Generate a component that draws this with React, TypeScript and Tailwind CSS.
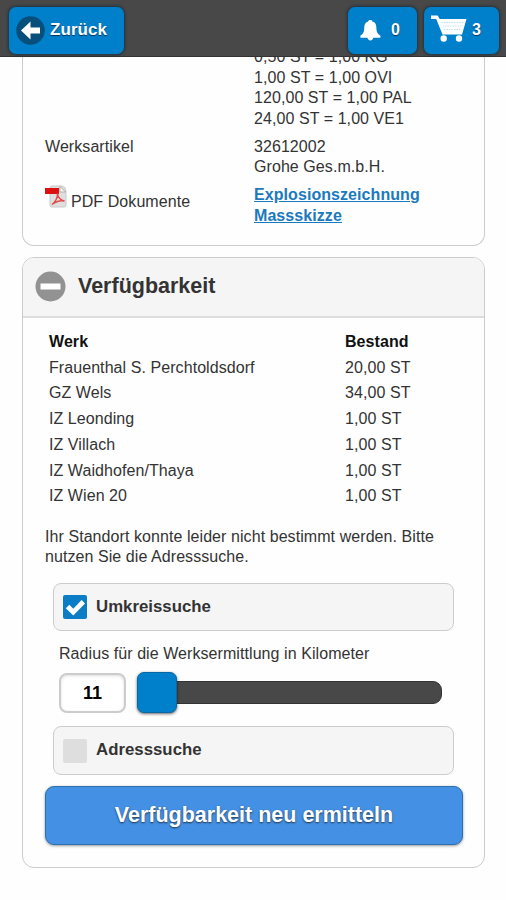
import React from "react";

const stock: [string, string][] = [
  ["Frauenthal S. Perchtoldsdorf", "20,00 ST"],
  ["GZ Wels", "34,00 ST"],
  ["IZ Leonding", "1,00 ST"],
  ["IZ Villach", "1,00 ST"],
  ["IZ Waidhofen/Thaya", "1,00 ST"],
  ["IZ Wien 20", "1,00 ST"],
];

function Header() {
  const button =
    "flex h-[47px] items-center rounded-[7px] bg-[#0080cb] font-bold text-white shadow-[0_0_3px_1px_rgba(10,40,60,0.65)] [text-shadow:0_1px_1px_#035]";
  return (
    <header className="relative z-10 flex h-[57px] shrink-0 items-start border-b border-[#333] bg-[#484848] pt-[7px] pr-[7px] pl-[9px]">
      <button className={button + " w-[115px] pl-[7px] text-[17px]"}>
        <svg width="29" height="29" viewBox="0 0 29 29">
          <circle cx="14.5" cy="14.5" r="14.3" fill="#064f7b" />
          <path d="M5 14.5 14.5 5.5v6H24v6h-9.5v6z" fill="#fff" />
        </svg>
        <span className="ml-[5px]">Zurück</span>
      </button>
      <button className={button + " ml-auto w-[69px] pl-[12px] text-[16px]"}>
        <svg width="21" height="23" viewBox="0 0 21 23" fill="#fff">
          <path d="M8.3 2.5C8.3.6 12.3.6 12.3 2.5c3.1.8 4.1 3.1 4.1 6.5 0 4 1.1 5.800 4 7.600v2.200h-7.200c-.5 3.700-5.200 3.700-5.700 0H.4v-2.200C3.300 14.800 4.200 13 4.200 9c0-3.400 1.200-5.700 4.100-6.500z" />
        </svg>
        <span className="ml-[10px]">0</span>
      </button>
      <button className={button + " ml-[7px] w-[75px] pl-[7px] text-[16px]"}>
        <svg width="36" height="29" viewBox="0 0 36 29" className="-mt-[7px]">
          <path d="M0 2.5h6q1 0 1.500 1.400L8.700 6H35.500l-4.500 15.500H11.500L5.200 6H0z" fill="#fff" />
          <path d="M10.5 9.500h22M11.500 13h20M13 16.500h17" stroke="#bddff3" strokeWidth="1.1" strokeDasharray="1.5 1" />
          <circle cx="12.7" cy="25.5" r="3.2" fill="#fff" />
          <circle cx="28" cy="25.5" r="3.2" fill="#fff" />
        </svg>
        <span className="ml-[5px]">3</span>
      </button>
    </header>
  );
}

function PdfIcon() {
  return (
    <svg width="22" height="24" viewBox="0 0 22 24">
      <path d="M7 1h10q4 1 4 5v14q0 2-2 2H7q-2 0-2-2V3q0-2 2-2z" fill="#dfdfdf" stroke="#cacaca" />
      <path d="M15 1.500v5.500h5.500z" fill="#fafafa" stroke="#999" strokeWidth=".7" />
      <path d="M0 3h14v6H0z" fill="#dc1010" />
      <path d="M7 19.500c3-2 6-7 5.500-11 0 4 3.500 7 7 7.500-4-1-8 0-12.500 3.500z" fill="none" stroke="#e44a4a" strokeWidth="1.5" />
    </svg>
  );
}

export default function App() {
  return (
    <div className="flex h-[900px] w-[506px] flex-col overflow-hidden bg-[#fefefe] font-['Liberation_Sans',Arial,sans-serif] text-[16px] leading-[20.4px] tracking-[0.07px] text-[#333]">
      <Header />
      <main className="flex flex-col pr-[21px] pl-[22px]">
        <section className="-mt-[10px] flex h-[199px] flex-col rounded-b-[12px] border border-t-0 border-[#ccc] pl-[22px]">
          <div className="mt-[0.4px] pl-[209px]">
            <p>0,50 ST = 1,00 KG</p>
            <p>1,00 ST = 1,00 OVI</p>
            <p>120,00 ST = 1,00 PAL</p>
            <p>24,00 ST = 1,00 VE1</p>
          </div>
          <div className="mt-[7.600px] flex">
            <p className="w-[209px]">Werksartikel</p>
            <div>
              <p>32612002</p>
              <p>Grohe Ges.m.b.H.</p>
            </div>
          </div>
          <div className="mt-[8px] flex">
            <div className="flex w-[209px]">
              <PdfIcon />
              <span className="mt-[7px] ml-[4px]">PDF Dokumente</span>
            </div>
            <div className="flex flex-col font-bold text-[#1b79bd] underline">
              <a>Explosionszeichnung</a>
              <a>Massskizze</a>
            </div>
          </div>
        </section>

        <section className="mt-[11px] h-[611px] overflow-hidden rounded-[12px] border border-[#ccc]">
          <h2 className="flex h-[60px] items-center border-b-2 border-[#ddd] bg-[#f5f5f5] pl-[12px] text-[21.5px] font-bold tracking-[0px]">
            <svg width="31" height="31" viewBox="0 0 31 31" className="-mt-[2px]">
              <circle cx="15.5" cy="15.5" r="15" fill="#929292" />
              <path d="M5.500 12.500h20v6h-20z" fill="#fff" />
            </svg>
            <span className="-mt-[2px] ml-[12px]">Verfügbarkeit</span>
          </h2>
          <div className="px-[22px]">
            <div className="mt-[11px] grid grid-cols-[296px_1fr] pl-[4px] leading-[25.7px]">
              <b className="text-[#111]">Werk</b>
              <b className="text-[#111]">Bestand</b>
              {stock.map(([site, qty]) => (
                <React.Fragment key={site}>
                  <span>{site}</span>
                  <span>{qty}</span>
                </React.Fragment>
              ))}
            </div>
            <p className="mt-[18px]">
              Ihr Standort konnte leider nicht bestimmt werden. Bitte
              <br />
              nutzen Sie die Adresssuche.
            </p>
            <label className="mt-[15px] ml-[8px] flex h-[48px] w-[401px] items-center rounded-[8px] border border-[#ccc] bg-[#f5f5f5] pl-[9px] text-[16.8px] font-bold tracking-[0.02px]">
              <svg width="24" height="24" viewBox="0 0 24 24">
                <rect width="24" height="24" rx="2" fill="#0b7dc6" />
                <path d="m2.800 13.300 3.500-3.600 4 4.100L18.600 5l3.400 3.400-11.700 12z" fill="#fff" />
              </svg>
              <span className="ml-[9px]">Umkreissuche</span>
            </label>
            <p className="mt-[13px] ml-[14px]">Radius für die Werksermittlung in Kilometer</p>
            <div className="mt-[8px] ml-[14px] flex h-[41px] items-center">
              <div className="h-[40px] w-[67px] rounded-[8px] border-2 border-[#ccc] bg-white text-center text-[18px] leading-[37px] font-bold text-black shadow-[inset_0_1px_3px_#ddd]">11</div>
              <div className="z-10 ml-[11px] h-[41px] w-[40px] rounded-[7px] border border-[#0868a3] bg-[#0080cb] shadow-[0_1px_3px_rgba(0,0,0,0.6)]" />
              <div className="-ml-[5px] h-[23px] w-[270px] rounded-r-[9px] border border-[#333] bg-[#484848]" />
            </div>
            <label className="mt-[13px] ml-[8px] flex h-[49px] w-[401px] items-center rounded-[8px] border border-[#ccc] bg-[#f5f5f5] pl-[9px] text-[16.8px] font-bold tracking-[0.02px]">
              <span className="h-[24px] w-[24px] rounded-[2px] bg-[#dedede]" />
              <span className="ml-[9px]">Adresssuche</span>
            </label>
            <button className="mt-[11px] h-[59px] w-[418px] rounded-[9px] border border-[#2c70ae] bg-[#4390e5] text-[21.5px] font-bold tracking-[0px] text-white shadow-[0_1px_3px_rgba(0,0,0,0.4)] [text-shadow:0_1px_2px_#234]">
              Verfügbarkeit neu ermitteln
            </button>
          </div>
        </section>
      </main>
    </div>
  );
}
